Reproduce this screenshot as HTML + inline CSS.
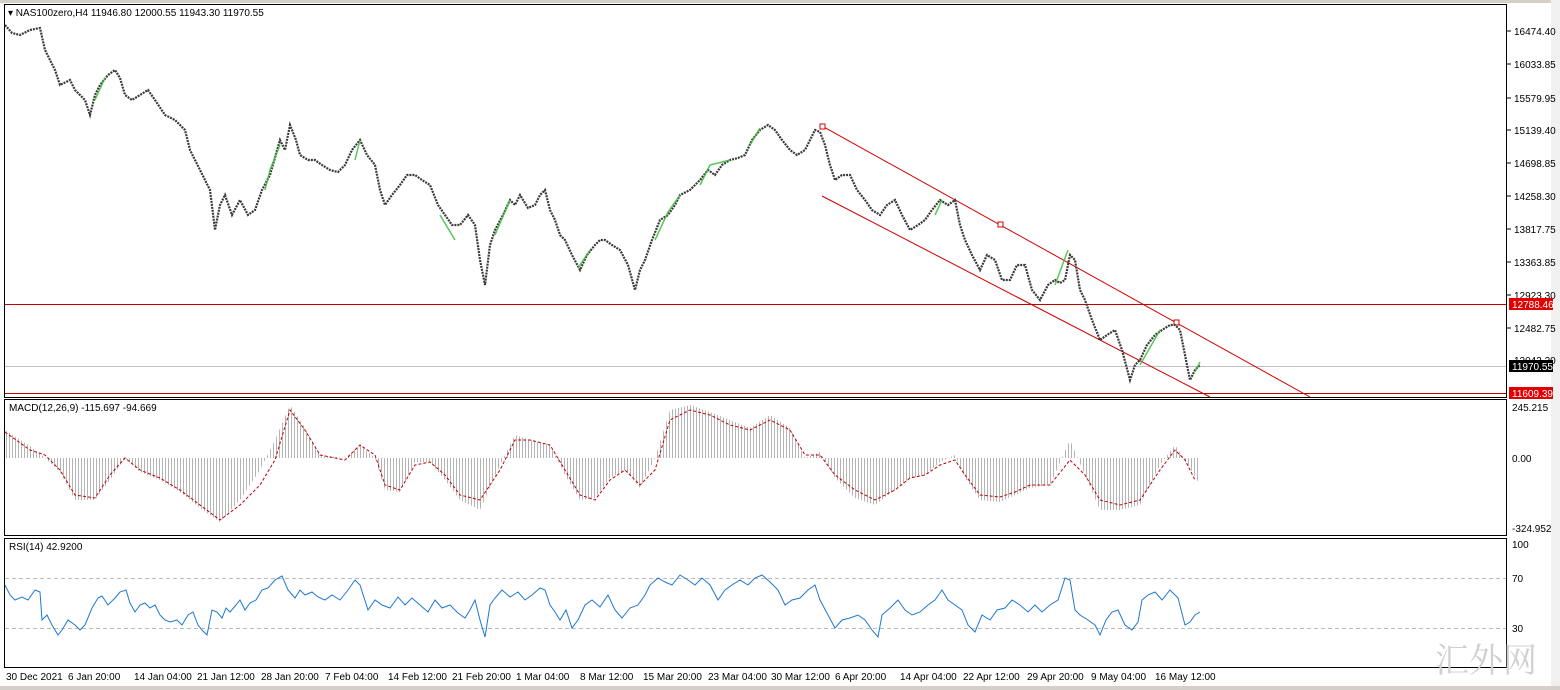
<!DOCTYPE html>
<html><head><meta charset="utf-8"><style>
body{margin:0;width:1560px;height:690px;background:#fff;overflow:hidden;font-family:"Liberation Sans",sans-serif;}
svg{position:absolute;left:0;top:0}
text{font-family:"Liberation Sans",sans-serif;font-size:10px;fill:#000}
</style></head><body>
<svg width="1560" height="690" viewBox="0 0 1560 690">
<defs>
<pattern id="hs" width="3" height="10" patternUnits="userSpaceOnUse"><rect x="0" y="0" width="1" height="10" fill="#b4b4b4"/></pattern>
</defs>
<rect x="0" y="0" width="1560" height="690" fill="#fff"/>
<rect x="0" y="0" width="1560" height="3" fill="#d4d0c8"/>
<rect x="1551" y="0" width="9" height="690" fill="#f0f0f0"/>
<rect x="0" y="686" width="1560" height="4" fill="#d4d0c8"/>
<rect x="4.5" y="4.5" width="1502" height="393" fill="none" stroke="#000"/>
<rect x="4.5" y="399.5" width="1502" height="136" fill="none" stroke="#000"/>
<rect x="4.5" y="538.5" width="1502" height="129" fill="none" stroke="#000"/>
<g font-size="10">
<text x="1514" y="35">16474.40</text><text x="1514" y="68">16033.85</text>
<text x="1514" y="102">15579.95</text><text x="1514" y="134">15139.40</text>
<text x="1514" y="167">14698.85</text><text x="1514" y="200">14258.30</text>
<text x="1514" y="233">13817.75</text><text x="1514" y="266">13363.85</text>
<text x="1514" y="299">12923.30</text><text x="1514" y="332">12482.75</text>
<text x="1514" y="364">12042.20</text>
</g>
<g stroke="#000"><line x1="1507" y1="31" x2="1511" y2="31"/><line x1="1507" y1="64" x2="1511" y2="64"/><line x1="1507" y1="98" x2="1511" y2="98"/><line x1="1507" y1="130" x2="1511" y2="130"/><line x1="1507" y1="163" x2="1511" y2="163"/><line x1="1507" y1="196" x2="1511" y2="196"/><line x1="1507" y1="229" x2="1511" y2="229"/><line x1="1507" y1="262" x2="1511" y2="262"/><line x1="1507" y1="295" x2="1511" y2="295"/><line x1="1507" y1="328" x2="1511" y2="328"/></g>
<line x1="5" y1="304.5" x2="1506" y2="304.5" stroke="#c00000"/>
<line x1="5" y1="366.5" x2="1506" y2="366.5" stroke="#c0c0c0"/>
<line x1="5" y1="393.5" x2="1506" y2="393.5" stroke="#c00000"/>
<rect x="1509" y="298" width="44" height="12" fill="#e00000"/><text x="1512" y="308" style="fill:#fff">12788.46</text>
<rect x="1509" y="360" width="44" height="12" fill="#000"/><text x="1512" y="370" style="fill:#fff">11970.55</text>
<rect x="1509" y="387" width="44" height="12" fill="#e00000"/><text x="1512" y="397" style="fill:#fff">11609.39</text>
<line x1="822" y1="126" x2="1310" y2="397" stroke="#d00000"/>
<line x1="822" y1="196" x2="1210" y2="397" stroke="#d00000"/>
<rect x="820" y="124" width="5" height="5" fill="#fff" stroke="#d00000"/>
<rect x="998" y="222" width="5" height="5" fill="#fff" stroke="#d00000"/>
<rect x="1174" y="320" width="5" height="5" fill="#fff" stroke="#d00000"/>
<polyline fill="none" stroke="#3a3a3a" stroke-width="2.2" stroke-dasharray="2,1" points="5,25 12,33 20,35 30,30 40,28 45,50 55,70 60,85 70,80 75,90 85,100 90,115 95,95 100,85 108,75 115,70 120,78 125,95 132,100 140,95 148,90 155,100 165,115 175,120 185,130 190,150 195,160 205,180 210,190 215,230 220,205 225,195 232,215 240,200 248,215 255,210 262,190 270,175 280,140 285,150 290,125 296,140 300,155 308,160 315,160 322,165 330,170 338,172 345,165 352,150 360,140 367,155 375,165 380,190 385,205 392,195 400,185 407,175 415,175 422,180 430,185 438,205 445,215 452,225 460,225 468,215 475,225 480,260 485,285 490,245 495,230 503,215 510,200 515,205 520,195 528,208 535,205 540,195 545,190 550,210 555,220 560,235 565,240 572,255 580,270 587,255 595,245 600,240 605,240 612,245 620,250 628,265 635,290 640,270 645,260 652,240 660,220 668,215 675,205 680,195 690,190 700,180 708,170 715,175 722,165 730,160 738,158 745,155 752,140 760,130 768,125 775,130 782,140 790,150 797,155 805,150 810,140 815,130 820,132 825,145 830,165 835,180 842,175 850,175 857,190 865,200 872,210 880,215 887,205 895,200 902,215 910,230 918,225 925,220 932,210 940,200 948,205 955,200 960,225 965,240 972,255 980,270 987,255 995,260 1002,280 1010,280 1017,265 1025,265 1032,290 1040,300 1048,285 1055,280 1060,283 1065,280 1070,255 1075,260 1080,290 1085,300 1092,320 1100,340 1107,335 1115,330 1122,350 1130,380 1135,365 1140,360 1147,345 1155,335 1162,330 1170,325 1175,325 1180,330 1185,355 1190,380 1195,370 1200,365"/>
<g stroke="#3cbe3c" stroke-width="1.5" fill="none" opacity="0.85">
<polyline points="265,190 270,170 280,145"/><polyline points="355,160 360,140"/><polyline points="495,235 510,200"/><polyline points="655,240 668,212 680,195"/><polyline points="700,185 710,165 730,160"/><polyline points="750,145 760,128"/><polyline points="935,215 942,200"/><polyline points="1140,365 1160,330"/><polyline points="1195,372 1200,362"/><polyline points="1055,285 1068,250"/><polyline points="95,100 105,78"/><polyline points="440,215 455,240"/><polyline points="578,268 590,250"/>
</g>
<text x="8" y="16">▾ NAS100zero,H4  11946.80 12000.55 11943.30 11970.55</text>
<polygon fill="url(#hs)" points="5,458 5,430 30,446 45,458 60,472 75,500 95,500 110,480 125,458 140,472 160,480 180,492 200,508 220,522 240,500 260,470 275,440 290,405 305,428 320,455 345,458 360,445 375,458 385,490 400,492 415,462 430,462 445,480 460,500 480,510 500,465 515,435 530,440 550,445 565,475 580,500 595,498 610,478 625,470 640,488 655,458 670,410 690,405 710,412 730,420 750,428 770,415 790,428 805,458 820,452 835,478 855,498 875,505 895,490 910,478 925,475 940,462 955,455 965,478 980,500 1000,502 1015,495 1030,488 1050,485 1070,440 1085,475 1100,510 1120,510 1140,505 1160,465 1175,445 1185,460 1200,485 1200,458"/>
<polyline fill="none" stroke="#c00000" stroke-dasharray="3,2" points="5,432 30,450 45,455 60,470 75,495 95,498 110,475 125,458 140,470 160,478 180,490 200,505 220,520 240,505 260,485 275,460 290,410 305,430 320,455 345,460 360,445 375,455 385,485 400,490 415,465 430,462 445,475 460,495 480,500 500,470 515,440 530,440 550,445 565,470 580,495 595,500 610,480 625,470 640,485 655,470 670,420 690,410 710,415 730,425 750,430 770,420 790,430 805,455 820,455 835,475 855,490 875,500 895,490 910,478 925,475 940,465 955,460 965,475 980,495 1000,497 1015,492 1030,485 1050,485 1070,460 1085,475 1100,500 1120,505 1140,500 1160,470 1175,450 1185,460 1195,480"/>
<text x="9" y="411">MACD(12,26,9) -115.697 -94.669</text>
<text x="1512" y="411">245.215</text><text x="1512" y="462">0.00</text><text x="1512" y="532">-324.952</text>
<line x1="5" y1="578.5" x2="1506" y2="578.5" stroke="#bbb" stroke-dasharray="4,3"/>
<line x1="5" y1="628.5" x2="1506" y2="628.5" stroke="#bbb" stroke-dasharray="4,3"/>
<text x="9" y="550">RSI(14) 42.9200</text>
<text x="1512" y="548">100</text><text x="1512" y="582">70</text><text x="1512" y="632">30</text>
<polyline fill="none" stroke="#1e78d0" stroke-width="1" points="5,585 10,595 15,600 22,597 28,600 35,590 40,592 42,620 47,615 52,625 58,635 62,630 68,620 75,625 80,630 85,625 92,608 98,598 102,596 108,605 115,598 120,592 126,590 130,603 135,612 140,605 145,603 150,608 155,605 160,615 165,620 170,622 177,620 182,625 188,615 193,612 198,625 202,630 207,635 212,610 217,612 222,618 226,608 230,612 236,605 240,600 245,610 250,603 256,600 262,590 268,588 275,580 282,576 288,590 295,598 300,590 305,595 312,592 318,597 325,600 332,595 340,600 348,590 355,580 360,585 368,610 375,600 382,605 390,608 398,597 405,605 412,598 420,605 428,612 435,600 442,608 450,605 458,613 465,618 470,610 475,600 480,620 485,637 490,605 495,598 502,590 510,597 518,592 525,600 532,595 540,588 545,590 550,605 555,612 560,620 566,610 572,628 578,620 585,605 592,600 600,607 608,595 615,610 622,618 630,608 638,605 645,595 650,585 658,578 665,582 672,585 680,575 688,580 695,585 702,578 710,585 718,600 725,590 732,585 740,580 748,585 755,578 762,575 770,582 778,590 785,605 792,600 800,598 808,590 815,585 820,600 828,615 835,628 842,620 850,618 858,615 865,620 872,630 878,637 882,615 890,608 898,600 905,610 912,615 920,612 928,605 935,600 942,590 948,600 955,605 962,610 968,625 975,632 982,615 990,620 997,610 1005,608 1012,600 1020,605 1028,612 1035,605 1042,612 1050,605 1058,600 1065,578 1070,580 1075,610 1080,615 1088,620 1095,625 1100,635 1106,620 1112,612 1118,610 1125,625 1132,630 1138,622 1142,600 1148,595 1155,592 1162,600 1170,590 1178,598 1185,625 1190,622 1195,615 1200,612"/>
<g>
<text x="6" y="680">30 Dec 2021</text><text x="68" y="680">6 Jan 20:00</text><text x="134" y="680">14 Jan 04:00</text><text x="197" y="680">21 Jan 12:00</text><text x="261" y="680">28 Jan 20:00</text><text x="325" y="680">7 Feb 04:00</text><text x="388" y="680">14 Feb 12:00</text><text x="452" y="680">21 Feb 20:00</text><text x="516" y="680">1 Mar 04:00</text><text x="580" y="680">8 Mar 12:00</text><text x="643" y="680">15 Mar 20:00</text><text x="708" y="680">23 Mar 04:00</text><text x="771" y="680">30 Mar 12:00</text><text x="835" y="680">6 Apr 20:00</text><text x="900" y="680">14 Apr 04:00</text><text x="963" y="680">22 Apr 12:00</text><text x="1027" y="680">29 Apr 20:00</text><text x="1091" y="680">9 May 04:00</text><text x="1155" y="680">16 May 12:00</text>
</g>
<text x="1435" y="672" style="font-size:34px;fill:#d0d0d0;font-family:'Noto Serif CJK SC',serif">汇外网</text>
</svg>
</body></html>
